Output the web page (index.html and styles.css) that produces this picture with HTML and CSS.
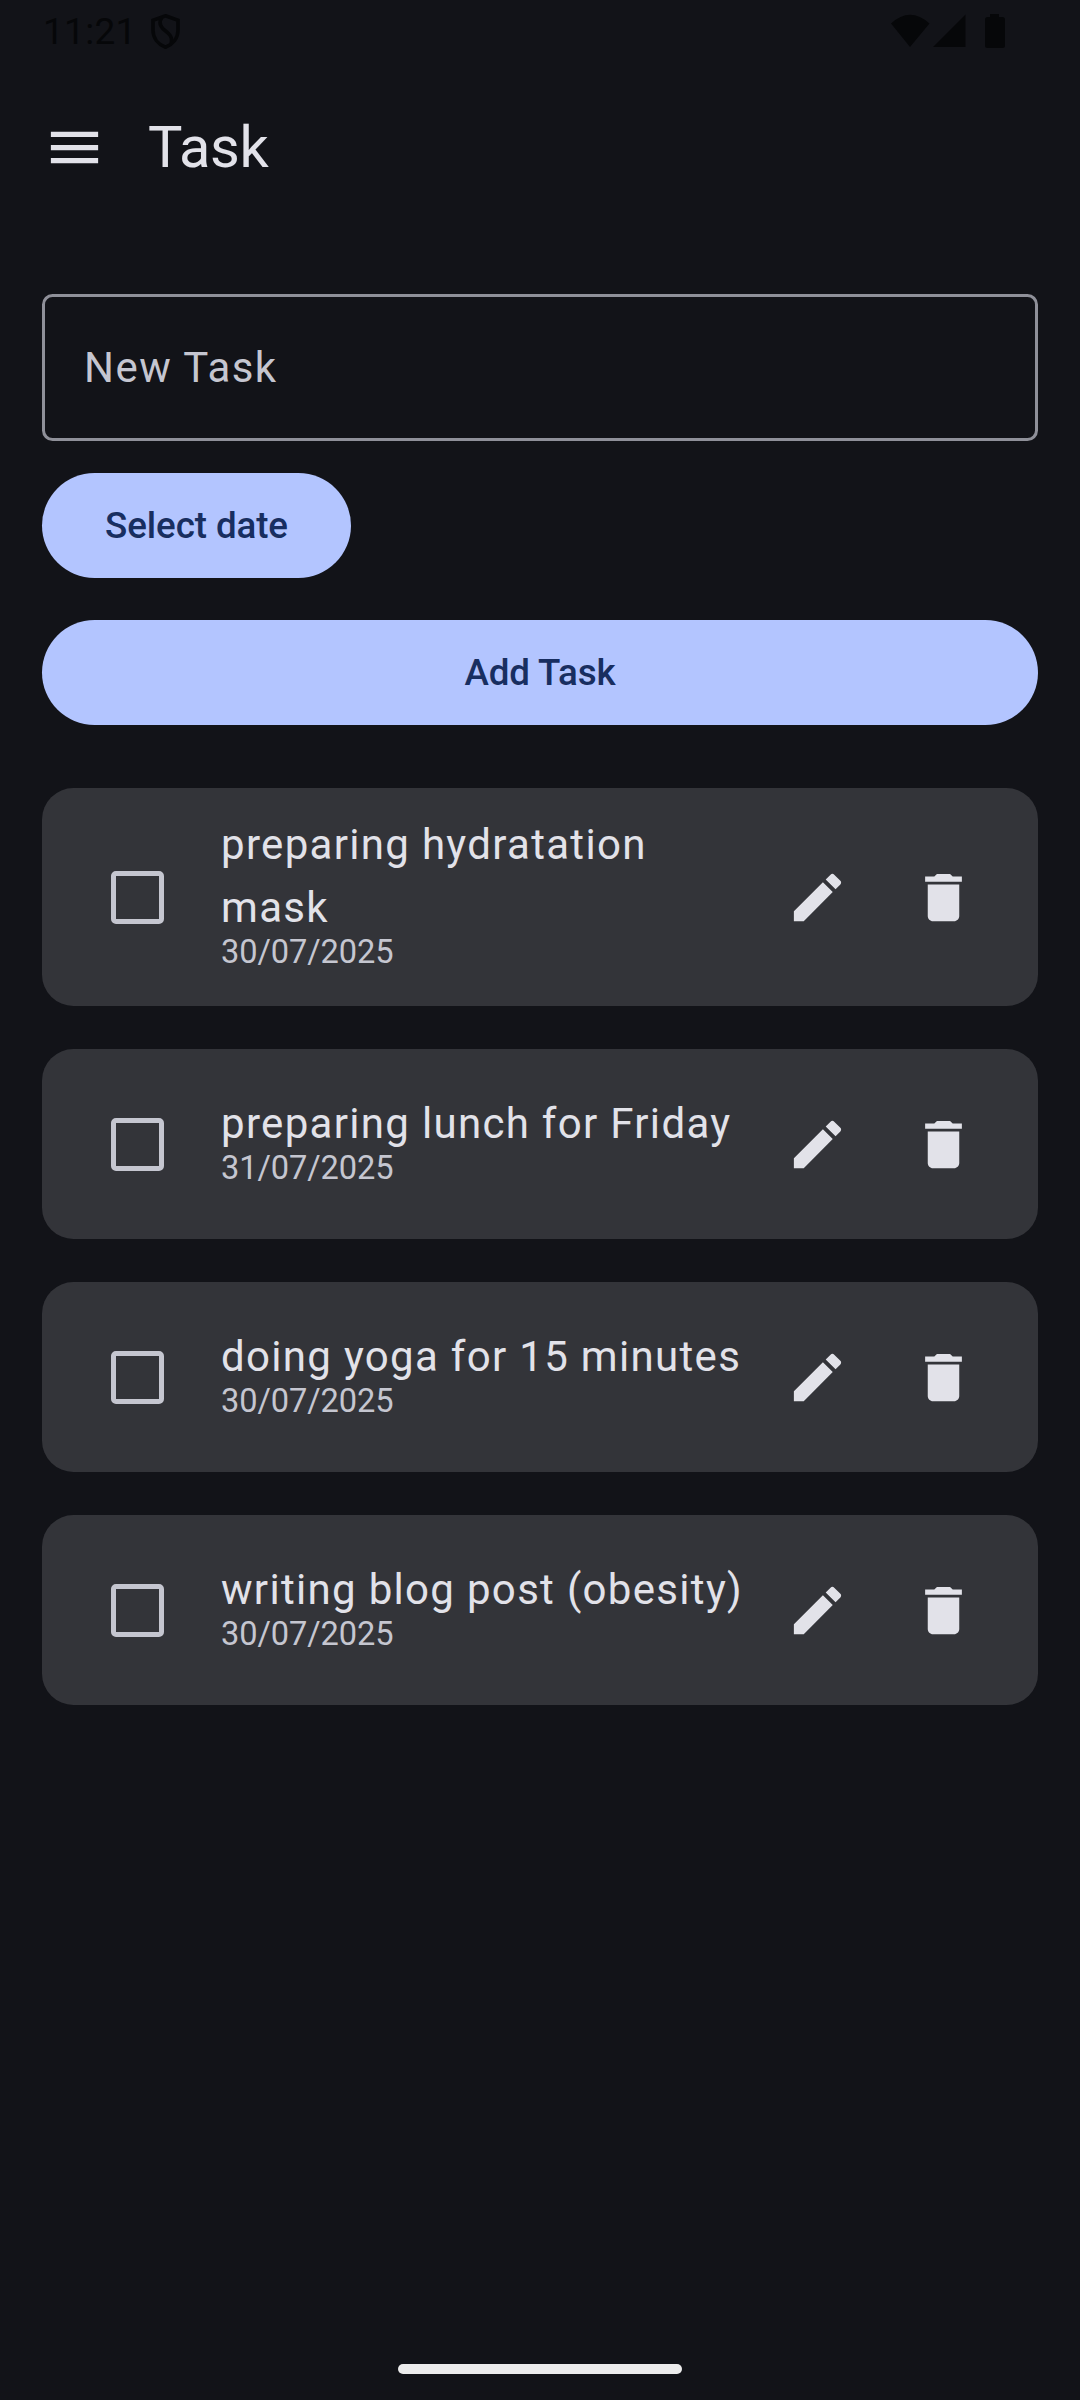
FILE: index.html
```html
<!DOCTYPE html>
<html lang="en">
<head>
<meta charset="utf-8">
<title>Task</title>
<link rel="stylesheet" href="styles.css">
</head>
<body>
<svg class="defs" aria-hidden="true">
  <symbol id="edit" viewBox="0 0 24 24"><path d="M3 17.25V21h3.75L17.81 9.94l-3.75-3.75L3 17.25zM20.71 7.04c.39-.39.39-1.02 0-1.41l-2.34-2.34c-.39-.39-1.02-.39-1.41 0l-1.83 1.83 3.75 3.75 1.83-1.83z"/></symbol>
  <symbol id="delete" viewBox="0 0 24 24"><path d="M6 19c0 1.1.9 2 2 2h8c1.1 0 2-.9 2-2V7H6v12zM19 4h-3.5l-1-1h-5l-1 1H5v2h14V4z"/></symbol>
</svg>
<div class="screen">
  <header class="status">
    <div class="status-left">
      <span class="clock">11:21</span>
      <svg class="shield" width="29" height="35" viewBox="0 0 29 35"><path d="M14.5 1.8 27 6.2v10c0 8-5.200 14.200-12.500 17C7.200 30.400 2 24.200 2 16.200v-10zM11 3.500C7 9 9.500 13 14 16.500S22 23 20 30"/></svg>
    </div>
    <svg class="status-icons" width="116" height="36" viewBox="0 0 116 36"><path d="M1 9.500Q20 -8 39.500 9.500L20 33zM43 33 75.500 .5V33zM100 0h9v3h3.500q2.500 0 2.500 2.500v26q0 2.500-2.500 2.500h-15q-2.500 0-2.500-2.500v-26q0-2.500 2.500-2.500h2.500z"/></svg>
  </header>
  <div class="appbar">
    <svg class="icon" viewBox="0 0 24 24"><path d="M3 18h18v-2H3v2zm0-5h18v-2H3v2zm0-7v2h18V6H3z"/></svg>
    <h1 class="title">Task</h1>
  </div>
  <main class="content">
    <div class="field">New Task</div>
    <button class="button button-date">Select date</button>
    <button class="button button-add">Add Task</button>
    <ul class="tasks">
      <li class="task task-tall">
        <span class="check"></span>
        <div class="text"><div class="name">preparing hydratation mask</div><div class="date">30/07/2025</div></div>
        <svg class="icon"><use href="#edit"/></svg><svg class="icon"><use href="#delete"/></svg>
      </li>
      <li class="task">
        <span class="check"></span>
        <div class="text"><div class="name">preparing lunch for Friday</div><div class="date">31/07/2025</div></div>
        <svg class="icon"><use href="#edit"/></svg><svg class="icon"><use href="#delete"/></svg>
      </li>
      <li class="task">
        <span class="check"></span>
        <div class="text"><div class="name">doing yoga for 15 minutes</div><div class="date">30/07/2025</div></div>
        <svg class="icon"><use href="#edit"/></svg><svg class="icon"><use href="#delete"/></svg>
      </li>
      <li class="task">
        <span class="check"></span>
        <div class="text"><div class="name">writing blog post (obesity)</div><div class="date">30/07/2025</div></div>
        <svg class="icon"><use href="#edit"/></svg><svg class="icon"><use href="#delete"/></svg>
      </li>
    </ul>
  </main>
  <div class="home-bar"></div>
</div>
</body>
</html>
```
FILE: styles.css
```css
* { box-sizing: border-box; }
body { margin: 0; background: #121318; color: #e2e2e9; font-family: Roboto, sans-serif; }
.defs { display: none; }
.screen { display: flex; flex-direction: column; width: 1080px; height: 2400px; padding-bottom: 26px; }
.status { display: flex; justify-content: space-between; height: 63px; padding: 14px 74px 0 43px; color: #060709; }
.status-left { display: flex; gap: 14px; }
.clock { font-size: 37px; line-height: 35px; letter-spacing: .3px; }
.shield { fill: none; stroke: #060709; stroke-width: 3.6; }
.status-icons { fill: #060709; }
.appbar { display: flex; align-items: center; height: 168px; padding-left: 43px; gap: 42px; }
.icon { flex: none; width: 63px; height: 63px; fill: #e2e2e9; }
.title { margin: 0; padding-top: 1px; font-size: 57.75px; line-height: 73.5px; font-weight: 400; letter-spacing: -.3px; }
.content { display: flex; flex-direction: column; align-items: flex-start; padding: 63px 42px 0; flex: 1; }
.field { width: 100%; height: 147px; padding: 0 39px; border: 3px solid #8f9099; border-radius: 10.5px; color: #c5c6d0; font-size: 42px; line-height: 141px; letter-spacing: 1.45px; }
.button { height: 105px; padding: 1px 0 0; border: 0; border-radius: 53px; background: #b3c5ff; color: #182e60; font: 500 36.75px/52px Roboto, sans-serif; letter-spacing: -.1px; white-space: nowrap; }
.button-date { width: 309px; margin-top: 32px; }
.button-add { width: 100%; margin-top: 42px; }
.tasks { display: flex; flex-direction: column; gap: 43px; width: 100%; margin: 63px 0 0; padding: 0; list-style: none; }
.task { display: flex; align-items: center; height: 190px; padding: 0 63px 0 69px; border-radius: 31.5px; background: #333439; }
.task-tall { height: 218px; }
.check { flex: none; width: 53px; height: 53px; border: 5px solid #c5c6d0; border-radius: 5px; }
.text { flex: none; width: 533px; margin: 0 32px 0 57px; }
.name { font-size: 42px; line-height: 63px; letter-spacing: 1.3125px; }
.date { padding-bottom: 16px; color: #c5c6d0; font-size: 32.6px; line-height: 26px; letter-spacing: -.1px; }
.task .icon + .icon { margin-left: 63px; }
.home-bar { align-self: center; width: 284px; height: 10px; border-radius: 5px; background: #ececec; }
```
